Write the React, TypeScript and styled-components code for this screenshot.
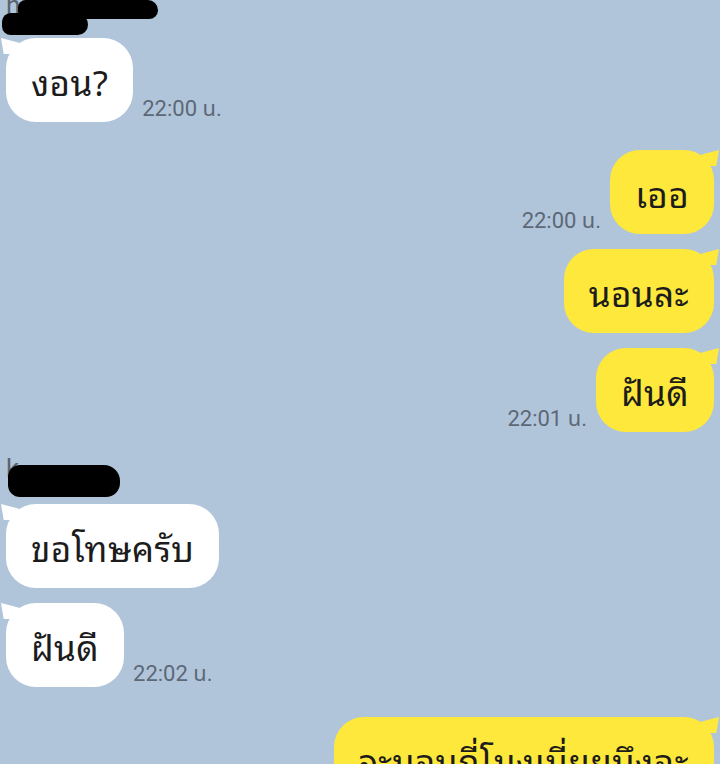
import React from 'react';
import styled, { createGlobalStyle, css } from 'styled-components';

type Side = 'in' | 'out';

interface Msg {
    id: number;
    side: Side;
    text: string;
    time?: string;
    gap: number;
    name?: 'top' | 'mid';
}

const messages: Array<Msg> = [
    { id: 1, side: 'in', text: 'งอน?', time: '22:00 น.', gap: 2, name: 'top' },
    { id: 2, side: 'out', text: 'เออ', time: '22:00 น.', gap: 28 },
    { id: 3, side: 'out', text: 'นอนละ', gap: 15 },
    { id: 4, side: 'out', text: 'ฝันดี', time: '22:01 น.', gap: 15 },
    { id: 5, side: 'in', text: 'ขอโทษครับ', gap: 31, name: 'mid' },
    { id: 6, side: 'in', text: 'ฝันดี', time: '22:02 น.', gap: 15 },
    { id: 7, side: 'out', text: 'จะนอนกี่โมงเนี่ยยบึงอะ', gap: 30 },
];

function App() {
    return (
        <>
            <GlobalStyle />
            <Chat>
                {messages.map(m => (
                    <React.Fragment key={m.id}>
                        {m.name === 'top' && (
                            <TopName>
                                <NameLetter>h</NameLetter>
                                <Blob $indent={18} $w={140} $h={20} />
                                <Blob $indent={2} $w={86} $h={24} $lift />
                            </TopName>
                        )}
                        {m.name === 'mid' && (
                            <MidName>
                                <NameLetter>k</NameLetter>
                                <Blob $indent={8} $w={112} $h={32} />
                            </MidName>
                        )}
                        <Row $side={m.side} $gap={m.name ? 3 : m.gap}>
                            <Bubble $side={m.side}>{m.text}</Bubble>
                            {m.time && <Time>{m.time}</Time>}
                        </Row>
                    </React.Fragment>
                ))}
            </Chat>
        </>
    );
}

export default App;

const GlobalStyle = createGlobalStyle`
    html, body {
        margin: 0;
        padding: 0;
        background: #b1c5da;
    }
`;

const Chat = styled.div`
    width: 720px;
    height: 764px;
    overflow: hidden;
    display: flex;
    flex-direction: column;
    background: #b1c5da;
    font-family: 'Noto Sans Thai Looped', 'Noto Sans Thai', 'Noto Sans', 'DejaVu Sans', sans-serif;

    > * {
        flex-shrink: 0;
    }
`;

const NameBox = styled.div`
    position: relative;
    display: flex;
    flex-direction: column;
`;

const TopName = styled(NameBox)`
    height: 35px;
`;

const MidName = styled(NameBox)`
    height: 36px;
    margin-top: 31px;
    padding-top: 2px;
`;

const NameLetter = styled.span`
    position: absolute;
    left: 6px;
    top: -10px;
    font-family: Roboto, sans-serif;
    font-size: 26px;
    color: #59636e;
`;

const Blob = styled.div<{ $indent: number; $w: number; $h: number; $lift?: boolean }>`
    position: relative;
    margin-left: ${p => p.$indent}px;
    margin-top: ${p => (p.$lift ? -6 : 0)}px;
    width: ${p => p.$w}px;
    height: ${p => p.$h}px;
    background: #000;
    border-radius: 12px 16px 14px 12px;
`;

const Row = styled.div<{ $side: Side; $gap: number }>`
    display: flex;
    align-items: flex-end;
    gap: 9px;
    margin-top: ${p => p.$gap}px;
    padding: 0 6px;
    flex-direction: ${p => (p.$side === 'out' ? 'row-reverse' : 'row')};
`;

const Bubble = styled.div<{ $side: Side }>`
    position: relative;
    flex-shrink: 0;
    height: 84px;
    box-sizing: border-box;
    padding: 0 25px;
    display: flex;
    align-items: center;
    border-radius: 30px;
    font-size: 35px;
    letter-spacing: 0.4px;
    line-height: 44px;
    color: #1c1c1c;
    white-space: nowrap;
    background: ${p => (p.$side === 'out' ? '#fde83b' : '#ffffff')};

    &::before {
        content: '';
        position: absolute;
        top: 0;
        width: 18px;
        height: 16px;
        background: inherit;
        ${p =>
            p.$side === 'out'
                ? css`
                      right: -5px;
                      clip-path: polygon(100% 0, 0 30%, 10% 100%, 85% 100%);
                  `
                : css`
                      left: -5px;
                      clip-path: polygon(0 0, 100% 30%, 90% 100%, 15% 100%);
                  `}
    }
`;

const Time = styled.span`
    font-family: Roboto, 'Noto Sans Thai', sans-serif;
    font-size: 22px;
    line-height: 24px;
    color: #5d6877;
    margin-bottom: 1px;
`;
